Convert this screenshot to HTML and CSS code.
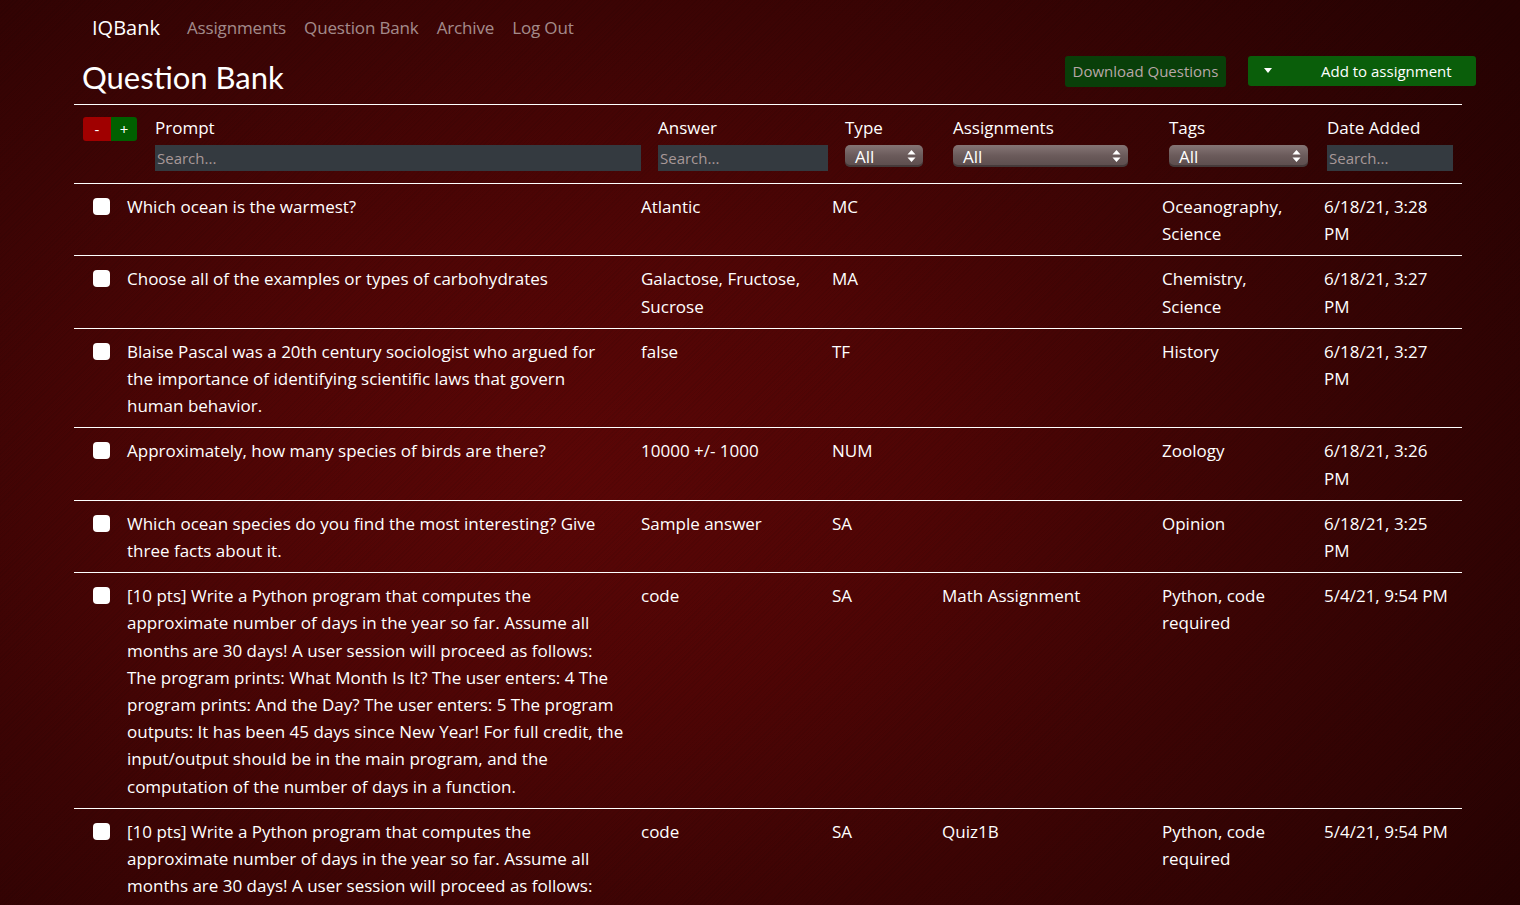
FILE: index.html
```html
<!DOCTYPE html>
<html lang="en">
<head>
<meta charset="utf-8">
<title>IQBank - Question Bank</title>
<link rel="stylesheet" href="styles.css">
</head>
<body>
<nav class="navbar">
  <a class="brand">IQBank</a>
  <a class="nav-link">Assignments</a>
  <a class="nav-link">Question Bank</a>
  <a class="nav-link">Archive</a>
  <a class="nav-link">Log Out</a>
</nav>
<main class="container">
  <div class="title-bar">
    <h1 class="page-title">Question Bank</h1>
    <div class="actions">
      <button class="btn-download">Download Questions</button>
      <button class="btn-add"><span class="caret"></span><span class="add-label">Add to assignment</span></button>
    </div>
  </div>
  <div class="filters">
    <div class="f-cell f-toggle">
      <button class="mini minus">-</button><button class="mini plus">+</button>
    </div>
    <div class="f-cell">
      <div class="f-label">Prompt</div>
      <div class="search w-prompt">Search...</div>
    </div>
    <div class="f-cell">
      <div class="f-label">Answer</div>
      <div class="search w-answer">Search...</div>
    </div>
    <div class="f-cell">
      <div class="f-label">Type</div>
      <div class="select w-type"><span>All</span><svg class="arrows" width="9" height="14" viewBox="0 0 9 14"><path d="M4.5 1 L8.5 5.5 H0.5 Z M4.5 13 L8.5 8.5 H0.5 Z" fill="#fff"/></svg></div>
    </div>
    <div class="f-cell">
      <div class="f-label">Assignments</div>
      <div class="select w-assign"><span>All</span><svg class="arrows" width="9" height="14" viewBox="0 0 9 14"><path d="M4.5 1 L8.5 5.5 H0.5 Z M4.5 13 L8.5 8.5 H0.5 Z" fill="#fff"/></svg></div>
    </div>
    <div class="f-cell">
      <div class="f-label">Tags</div>
      <div class="select w-tags"><span>All</span><svg class="arrows" width="9" height="14" viewBox="0 0 9 14"><path d="M4.5 1 L8.5 5.5 H0.5 Z M4.5 13 L8.5 8.5 H0.5 Z" fill="#fff"/></svg></div>
    </div>
    <div class="f-cell">
      <div class="f-label">Date Added</div>
      <div class="search w-date">Search...</div>
    </div>
  </div>
  <table class="questions">
    <colgroup>
      <col class="c-check"><col class="c-prompt"><col class="c-answer"><col class="c-type"><col class="c-assign"><col class="c-tags"><col class="c-date">
    </colgroup>
    <tbody>
      <tr>
        <td class="check"><span class="box"></span></td>
        <td class="prompt">Which ocean is the warmest?</td>
        <td>Atlantic</td>
        <td>MC</td>
        <td></td>
        <td>Oceanography, Science</td>
        <td>6/18/21, 3:28 PM</td>
      </tr>
      <tr>
        <td class="check"><span class="box"></span></td>
        <td class="prompt">Choose all of the examples or types of carbohydrates</td>
        <td>Galactose, Fructose, Sucrose</td>
        <td>MA</td>
        <td></td>
        <td>Chemistry, Science</td>
        <td>6/18/21, 3:27 PM</td>
      </tr>
      <tr>
        <td class="check"><span class="box"></span></td>
        <td class="prompt">Blaise Pascal was a 20th century sociologist who argued for the importance of identifying scientific laws that govern human behavior.</td>
        <td>false</td>
        <td>TF</td>
        <td></td>
        <td>History</td>
        <td>6/18/21, 3:27 PM</td>
      </tr>
      <tr>
        <td class="check"><span class="box"></span></td>
        <td class="prompt">Approximately, how many species of birds are there?</td>
        <td>10000 +/- 1000</td>
        <td>NUM</td>
        <td></td>
        <td>Zoology</td>
        <td>6/18/21, 3:26 PM</td>
      </tr>
      <tr>
        <td class="check"><span class="box"></span></td>
        <td class="prompt">Which ocean species do you find the most interesting? Give three facts about it.</td>
        <td>Sample answer</td>
        <td>SA</td>
        <td></td>
        <td>Opinion</td>
        <td>6/18/21, 3:25 PM</td>
      </tr>
      <tr>
        <td class="check"><span class="box"></span></td>
        <td class="prompt">[10 pts] Write a Python program that computes the approximate number of days in the year so far. Assume all months are 30 days! A user session will proceed as follows: The program prints: What Month Is It? The user enters: 4 The program prints: And the Day? The user enters: 5 The program outputs: It has been 45 days since New Year! For full credit, the input/output should be in the main program, and the computation of the number of days in a function.</td>
        <td>code</td>
        <td>SA</td>
        <td>Math Assignment</td>
        <td>Python, code required</td>
        <td>5/4/21, 9:54 PM</td>
      </tr>
      <tr>
        <td class="check"><span class="box"></span></td>
        <td class="prompt">[10 pts] Write a Python program that computes the approximate number of days in the year so far. Assume all months are 30 days! A user session will proceed as follows: The program prints: What Month Is It? The user enters: 4 The program prints: And the Day? The user enters: 5 The program outputs: It has been 45 days since New Year! For full credit, the input/output should be in the main program, and the computation of the number of days in a function.</td>
        <td>code</td>
        <td>SA</td>
        <td>Quiz1B</td>
        <td>Python, code required</td>
        <td>5/4/21, 9:54 PM</td>
      </tr>
    </tbody>
  </table>
</main>
</body>
</html>
```
FILE: styles.css
```css
html, body {
  margin: 0;
  padding: 0;
}
body {
  min-height: 100vh;
  color: #fff;
  font-family: "Open Sans", "Liberation Sans", sans-serif;
  font-size: 17px;
  background-color: #2a0303;
  background-image:
    repeating-linear-gradient(135deg, rgba(0,0,0,0.06) 0 1px, rgba(0,0,0,0) 1px 3px),
    radial-gradient(ellipse 75% 85% at 38% 52%, #5a0606 0%, #4f0505 30%, #3c0404 60%, #260202 100%);
  background-attachment: fixed;
}

.navbar {
  height: 55px;
  display: flex;
  align-items: center;
  padding-left: 92px;
  gap: 18px;
}
.brand {
  color: #fff;
  font-size: 20px;
  margin-right: 9px;
}
.nav-link {
  color: rgba(255,255,255,0.55);
  font-size: 17px;
  letter-spacing: -0.15px;
}

.container {
  margin-left: 74px;
  width: 1388px;
}

.title-bar {
  display: flex;
  justify-content: space-between;
  align-items: center;
  height: 49px;
  border-bottom: 1px solid #fff;
}
.page-title {
  margin: 0 0 6px 8px;
  font-family: "Lato", sans-serif;
  font-weight: 400;
  font-size: 31px;
  line-height: 40px;
}
.actions {
  display: flex;
  align-items: flex-start;
  gap: 22px;
  margin-right: -14px;
  margin-bottom: 17px;
}
.btn-download {
  width: 161px;
  height: 31px;
  border: none;
  border-radius: 3px;
  font-family: inherit;
  font-size: 15px;
  color: #b8a8a8;
  background-color: #0b4f0b;
  background-image: radial-gradient(circle, rgba(0,0,0,0.45) 0.6px, rgba(0,0,0,0) 0.8px);
  background-size: 2px 2px;
  padding: 0;
}
.btn-add {
  width: 228px;
  height: 30px;
  border: none;
  border-radius: 3px;
  background: #0a5e0a;
  color: #fff;
  font-family: inherit;
  font-size: 15px;
  display: flex;
  align-items: center;
  padding: 0 0 0 16px;
}
.caret {
  width: 0;
  height: 0;
  border-left: 4px solid transparent;
  border-right: 4px solid transparent;
  border-top: 5px solid #fff;
}
.add-label {
  margin-left: 49px;
}

.filters {
  display: grid;
  grid-template-columns: 81px 503px 187px 108px 216px 158px 135px;
  height: 66px;
  border-bottom: 1px solid #fff;
  padding-top: 12px;
}
.f-toggle {
  display: flex;
  align-items: flex-start;
  padding-left: 9px;
}
.mini {
  height: 24px;
  border: none;
  color: #fff;
  font-family: inherit;
  font-size: 15px;
  padding: 0;
  line-height: 24px;
}
.minus {
  width: 28px;
  background: #a00000;
  border-radius: 3px 0 0 3px;
}
.plus {
  width: 26px;
  background: #006000;
  border-radius: 0 3px 3px 0;
}
.f-label {
  font-size: 17px;
  line-height: 22px;
  margin-bottom: 6px;
}
.search {
  height: 26px;
  background: #343a40;
  color: #a89898;
  font-size: 15px;
  line-height: 26px;
  padding-left: 2px;
  box-sizing: border-box;
}
.w-prompt { width: 486px; }
.w-answer { width: 170px; }
.w-date { width: 126px; }

.select {
  height: 22px;
  margin-top: 5px;
  border-radius: 5px;
  background: linear-gradient(#857575, #6a5a5a 50%, #5b4c4c);
  box-shadow: inset 0 -2px 0 rgba(0,0,0,0.25);
  display: flex;
  align-items: center;
  justify-content: space-between;
  padding: 0 7px 0 10px;
  box-sizing: border-box;
  font-size: 17px;
  color: #fff;
}
.arrows { display: block; }
.w-type { width: 78px; }
.w-assign { width: 175px; }
.w-tags { width: 139px; }

.questions {
  width: 1388px;
  table-layout: fixed;
  border-collapse: collapse;
}
.c-check { width: 45px; }
.c-prompt { width: 514px; }
.c-answer { width: 191px; }
.c-type { width: 110px; }
.c-assign { width: 220px; }
.c-tags { width: 162px; }
.c-date { width: 146px; }

.questions td {
  padding: 9px 8px 8px 8px;
  vertical-align: top;
  line-height: 27.2px;
  border-bottom: 1px solid #fff;
}
.questions td.prompt {
  padding-right: 9px;
}
.questions td.check {
  padding-left: 19px;
  padding-right: 0;
}
.box {
  display: block;
  width: 17px;
  height: 17px;
  margin-top: 5px;
  border-radius: 4px;
  background: #fff;
}
```
